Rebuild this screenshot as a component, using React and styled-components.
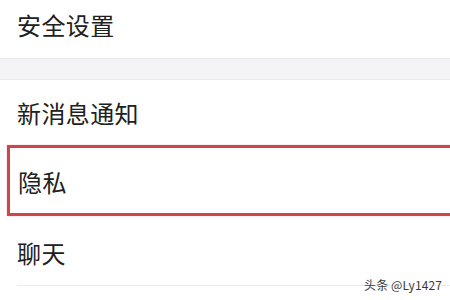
import React from "react";
import styled, { createGlobalStyle } from "styled-components";

const Global = createGlobalStyle`
  html, body { margin: 0; padding: 0; background: #ffffff; }
  body { width: 450px; height: 300px; overflow: hidden; }
`;

const Page = styled.div`
  position: relative;
  width: 450px;
  height: 300px;
  overflow: hidden;
  background: #ffffff;
  font-family: "Noto Sans CJK SC", "Noto Sans", sans-serif;
  display: flex;
  flex-direction: column;
`;

const Row = styled.div`
  box-sizing: border-box;
  height: ${(p) => p.$h}px;
  display: flex;
  align-items: flex-start;
  padding-left: ${(p) => (p.$highlight ? 8 : 17)}px;
  padding-top: ${(p) => p.$top}px;
  font-size: 24px;
  color: #202020;
  letter-spacing: 0.4px;
  ${(p) =>
    p.$highlight &&
    `
    margin-left: 7px;
    margin-right: -10px;
    border: 3px solid #d3434b;
    box-shadow: 0 0 1px rgba(211,67,75,0.5);
  `}
`;

const Label = styled.span`
  line-height: 24px;
`;

const Band = styled.div`
  height: 20px;
  background: #f4f4f7;
  border-top: 1px solid #e9e9ec;
  border-bottom: 1px solid #eaeaee;
`;

const Divider = styled.div`
  height: 1px;
  margin-left: 17px;
  background: #ebebeb;
`;

const Watermark = styled.div`
  position: absolute;
  right: 8px;
  bottom: 9px;
  font-family: "Noto Sans CJK SC", "Liberation Sans", sans-serif;
  font-size: 12px;
  line-height: 12px;
  color: #3a3a3a;
  letter-spacing: 0.1px;
  text-shadow: 0 0 2px #fff, 0 0 2px #fff;
`;

export default function App() {
  return (
    <Page>
      <Global />
      <Row $h={58} $top={13}>
        <Label>安全设置</Label>
      </Row>
      <Band />
      <Row $h={65} $top={21}>
        <Label>新消息通知</Label>
      </Row>
      <Row $h={71} $highlight $top={22}>
        <Label>隐私</Label>
      </Row>
      <Row $h={69} $top={25}>
        <Label>聊天</Label>
      </Row>
      <Divider />
      <Watermark>头条 @Ly1427</Watermark>
    </Page>
  );
}
